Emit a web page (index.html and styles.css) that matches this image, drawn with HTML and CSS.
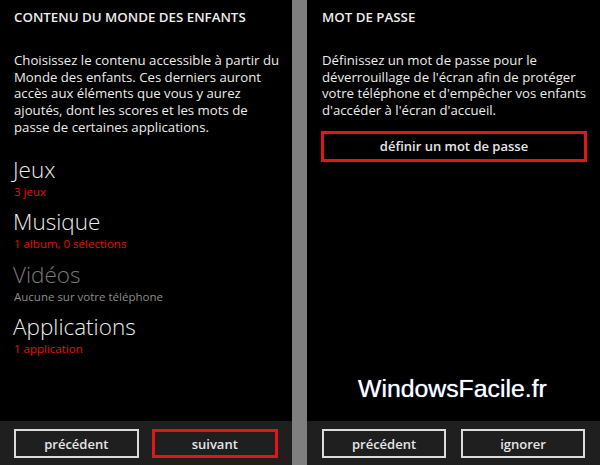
FILE: index.html
```html
<!DOCTYPE html>
<html lang="fr">
<head>
    <meta charset="UTF-8">
    <meta name="viewport" content="width=device-width, initial-scale=1.0">
    <title>Coin des enfants</title>
    <link rel="stylesheet" href="styles.css">
</head>
<body>

<div class="screen">
    <div class="panel panel-left">
        <div class="content">
            <h2>CONTENU DU MONDE DES ENFANTS</h2>
            <p class="intro">Choisissez le contenu accessible à partir du<br>Monde des enfants. Ces derniers auront<br>accès aux éléments que vous y aurez<br>ajoutés, dont les scores et les mots de<br>passe de certaines applications.</p>

            <ul class="items">
                <li>
                    <span class="item-title">Jeux</span>
                    <span class="item-sub">3 jeux</span>
                </li>
                <li>
                    <span class="item-title">Musique</span>
                    <span class="item-sub">1 album, 0 sélections</span>
                </li>
                <li class="disabled">
                    <span class="item-title">Vidéos</span>
                    <span class="item-sub">Aucune sur votre téléphone</span>
                </li>
                <li>
                    <span class="item-title">Applications</span>
                    <span class="item-sub">1 application</span>
                </li>
            </ul>
        </div>
        <div class="appbar">
            <button class="btn">précédent</button>
            <button class="btn btn-marked">suivant</button>
        </div>
    </div>

    <div class="separator"></div>

    <div class="panel panel-right">
        <div class="content">
            <h2>MOT DE PASSE</h2>
            <p class="intro">Définissez un mot de passe pour le<br>déverrouillage de l'écran afin de protéger<br>votre téléphone et d'empêcher vos enfants<br>d'accéder à l'écran d'accueil.</p>
            <button class="btn btn-wide btn-marked">définir un mot de passe</button>
        </div>
        <div class="appbar">
            <button class="btn">précédent</button>
            <button class="btn">ignorer</button>
        </div>
        <div class="watermark">WindowsFacile.fr</div>
    </div>
</div>

</body>
</html>
```

FILE: styles.css
```css
body {
    margin: 0;
    padding: 0;
    background-color: #000;
    font-family: 'Open Sans', 'Noto Sans', sans-serif;
    color: #ececec;
}

.screen {
    display: flex;
    width: 600px;
    height: 465px;
    overflow: hidden;
}

.panel {
    display: flex;
    flex-direction: column;
    position: relative;
}

.panel-left {
    width: 292px;
}

.panel-right {
    flex: 1;
}

.separator {
    width: 15px;
    background-color: #7f7f7f;
}

.content {
    flex: 1;
    padding: 9px 14px 0 14px;
}

.panel-right .content {
    padding-left: 15px;
    padding-right: 13px;
}

h2 {
    margin: 0;
    font-size: 13.3px;
    font-weight: 600;
    line-height: 17px;
}

.intro {
    margin: 26px 0 0 0;
    font-size: 13.2px;
    line-height: 16.7px;
    white-space: nowrap;
}

.items {
    list-style: none;
    margin: 20px 0 0 0;
    padding: 0;
}

.items li {
    display: flex;
    flex-direction: column;
    margin-bottom: 9.5px;
}

.item-title {
    font-size: 22.5px;
    font-weight: 300;
    line-height: 28px;
    margin-left: -1px;
}

.item-sub {
    font-size: 11.5px;
    line-height: 15px;
    color: #e51400;
}

.disabled .item-title {
    color: #7a7a7a;
}

.disabled .item-sub {
    color: #8c8c8c;
}

.appbar {
    height: 44px;
    background-color: #1f1f1f;
    display: flex;
    align-items: center;
    gap: 13px;
    padding: 0 14px;
}

.panel-right .appbar {
    padding: 0 15px;
    gap: 15px;
}

.btn {
    flex: 1;
    height: 29px;
    margin-top: 1px;
    border: 2px solid #dcdcdc;
    background-color: #1f1f1f;
    color: #e6e6e6;
    font-family: 'Open Sans', 'Noto Sans', sans-serif;
    font-size: 13px;
    font-weight: 600;
    padding: 0;
}

.btn-marked {
    border: 3px solid #e3151b;
}

.btn-wide {
    display: block;
    width: 266px;
    height: 31px;
    margin: 12px 0 0 -1px;
    background-color: #000;
}

.watermark {
    position: absolute;
    left: 51px;
    top: 375px;
    font-family: 'Liberation Sans', Arial, sans-serif;
    font-size: 24.8px;
    color: #fff;
    text-shadow: 0 0 1px #9ec3ff;
}
```
